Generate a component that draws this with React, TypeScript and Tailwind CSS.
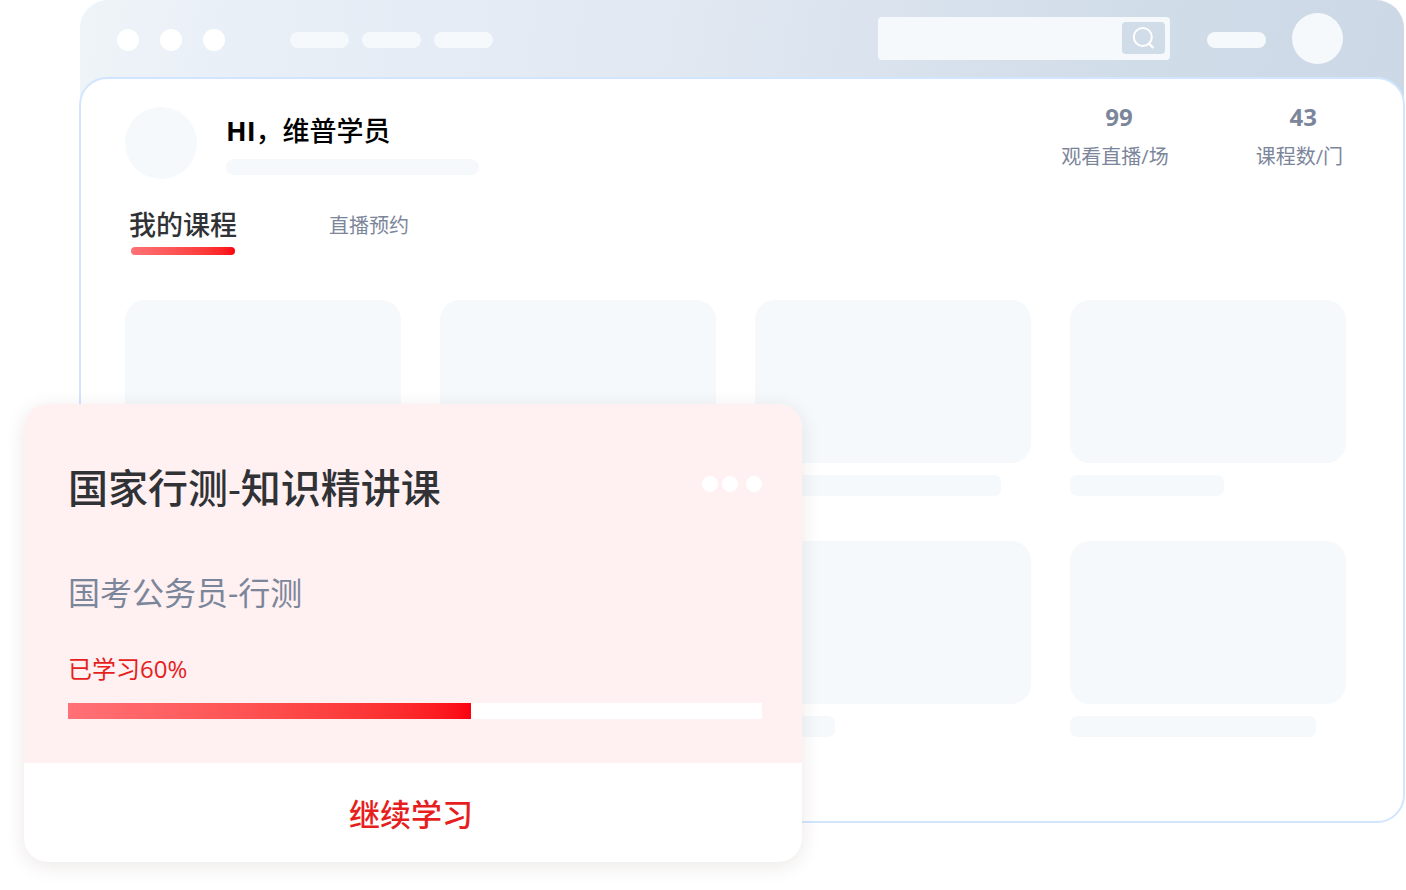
import React from "react";

const stats = [
  { value: 99, label: "观看直播/场" },
  { value: 43, label: "课程数/门" },
];

const courseCaptions = [
  "w-[154px]",
  "w-[246px]",
  "w-[246px]",
  "w-[154px]",
  "w-[246px]",
  "w-[154px]",
  "w-[80px]",
  "w-[246px]",
];

function SearchIcon() {
  return (
    <svg viewBox="0 0 24 24" className="h-6 w-6" fill="none" stroke="#ffffff" strokeWidth="2" aria-hidden="true">
      <circle cx="10.8" cy="11" r="9" />
      <path d="M16.2 16.8 21.4 22" strokeWidth="2.4" />
    </svg>
  );
}

function TitleBar() {
  return (
    <header className="mx-px rounded-t-[28px] bg-[linear-gradient(100deg,#eef4f7_0%,#e9eff7_12%,#e1e8f2_45%,#d0dce8_80%,#ccd8e6_100%)] pb-[30px]">
      <div className="flex h-[76px] items-center justify-between pr-[61px] pl-[37px]">
        <div className="flex items-center gap-[65px] pt-1">
          <div className="flex gap-[21px]">
            <span className="h-[22px] w-[22px] rounded-full bg-white" />
            <span className="h-[22px] w-[22px] rounded-full bg-white" />
            <span className="h-[22px] w-[22px] rounded-full bg-white" />
          </div>
          <div className="flex items-center gap-[13px]">
            <span className="h-4 w-[59px] rounded-full bg-[#f5f9fc]" />
            <span className="h-4 w-[59px] rounded-full bg-[#f5f9fc]" />
            <span className="h-4 w-[59px] rounded-full bg-[#f5f9fc]" />
          </div>
        </div>
        <div className="flex items-center">
          <form
            role="search"
            onSubmit={(e) => e.preventDefault()}
            className="flex h-[43px] w-[292px] items-center rounded-[4px] bg-[#f5f9fc] pr-[5px]"
          >
            <input
              type="search"
              aria-label="搜索"
              className="h-full min-w-0 flex-1 bg-transparent px-3 text-base text-[#7c869b] outline-none"
            />
            <button
              type="submit"
              aria-label="搜索"
              className="flex h-8 w-[43px] items-center justify-center rounded-[4px] bg-[#d0dce8]"
            >
              <SearchIcon />
            </button>
          </form>
          <span className="mt-1 ml-[37px] h-4 w-[59px] rounded-full bg-[#f5f9fc]" />
          <span className="ml-[26px] h-[51px] w-[51px] rounded-full bg-[#f5f9fc]" />
        </div>
      </div>
    </header>
  );
}

function Profile() {
  return (
    <section className="flex items-start justify-between">
      <div className="flex gap-[29px]">
        <span className="h-[72px] w-[72px] rounded-full bg-[#f5f9fc]" />
        <div className="pt-1">
          <h1 className="text-[27px] leading-10 font-medium text-black">
            <span className="font-bold">HI</span>，维普学员
          </h1>
          <div className="mt-2 h-4 w-[253px] rounded-full bg-[#f5f9fc]" />
        </div>
      </div>
      <dl className="flex gap-[87px] pr-[3px] text-[#7c869b]">
        {stats.map((s) => (
          <div key={s.label} className="flex flex-col-reverse text-center">
            <dt className="mt-[14px] text-[20px] leading-8">{s.label}</dt>
            <dd className="pl-2 text-[24px] leading-5 font-bold">{s.value}</dd>
          </div>
        ))}
      </dl>
    </section>
  );
}

function Tabs() {
  return (
    <nav className="mt-[26px] flex items-start gap-[92px]">
      <button type="button" className="flex flex-col items-center gap-0.5 pl-1">
        <span className="text-[27px] leading-10 font-medium text-[#303236]">我的课程</span>
        <span className="h-2 w-[104px] rounded-full bg-linear-to-r from-[#ff7176] to-[#fb0011]" />
      </button>
      <button type="button" className="text-[20px] leading-[42px] text-[#7c869b]">
        直播预约
      </button>
    </nav>
  );
}

function CourseCard() {
  return (
    <article className="absolute top-[404px] left-6 w-[778px] max-w-[calc(100%-48px)] overflow-hidden rounded-3xl bg-white shadow-[0_4px_20px_rgba(70,30,20,0.10)]">
      <div className="bg-[#fff0f1] px-10 pt-14 pb-11 pl-11">
        <div className="flex items-start justify-between">
          <h2 className="text-[40px] leading-[56px] font-medium text-[#303236]">国家行测-知识精讲课</h2>
          <button type="button" aria-label="更多" className="mt-4 flex gap-1">
            <span className="h-4 w-4 rounded-full bg-white" />
            <span className="h-4 w-4 rounded-full bg-white" />
            <span className="ml-1 h-4 w-4 rounded-full bg-white" />
          </button>
        </div>
        <p className="mt-[53px] text-[32px] leading-[48px] text-[#7c869b]">国考公务员-行测</p>
        <p className="mt-8 text-[24px] leading-10 text-[#e61e1e]">已学习60%</p>
        <div
          role="progressbar"
          aria-label="已学习"
          aria-valuenow={60}
          aria-valuemin={0}
          aria-valuemax={100}
          className="mt-[14px] h-4 bg-white"
        >
          <div className="h-full w-[58%] bg-linear-to-r from-[#ff7176] to-[#fb0011]" />
        </div>
      </div>
      <button type="button" className="block h-[99px] w-full pt-1 pr-1 text-[31px] font-medium text-[#e61e1e]">
        继续学习
      </button>
    </article>
  );
}

export default function App() {
  return (
    <div className="relative min-h-screen bg-white pr-px pb-[67px] pl-[79px] font-['Open_Sans','Noto_Sans_CJK_SC',sans-serif]">
      <TitleBar />
      <main className="relative -mt-[29px] rounded-[28px] border-2 border-[#d1e5ff] bg-white pt-7 pr-[57px] pb-[84px] pl-11">
        <Profile />
        <Tabs />
        <section className="mt-[45px] grid grid-cols-4 gap-x-[39px] gap-y-[45px]">
          {courseCaptions.map((width, i) => (
            <div key={i}>
              <div className="h-[163px] rounded-[20px] bg-[#f5f9fc]" />
              <div className={`mt-3 h-[21px] max-w-full rounded-[7px] bg-[#f5f9fc] ${width}`} />
            </div>
          ))}
        </section>
      </main>
      <CourseCard />
    </div>
  );
}
